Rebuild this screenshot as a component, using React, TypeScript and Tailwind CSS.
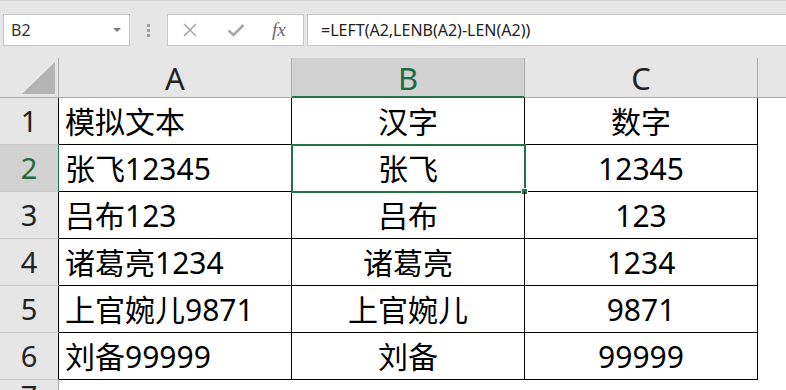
import React from "react";

const rows = [
  ["模拟文本", "汉字", "数字"],
  ["张飞12345", "张飞", "12345"],
  ["吕布123", "吕布", "123"],
  ["诸葛亮1234", "诸葛亮", "1234"],
  ["上官婉儿9871", "上官婉儿", "9871"],
  ["刘备99999", "刘备", "99999"],
];

const cols = ["A", "B", "C"];

const cellFont = "font-['Noto_Sans','Noto_Sans_CJK_SC',sans-serif]";

export default function App() {
  return (
    <div className="w-[786px] h-[390px] overflow-hidden bg-white font-['Noto_Sans','Noto_Sans_CJK_SC',sans-serif] text-[#222]">
      {/* Formula bar */}
      <div className="h-[58px] bg-[#e6e6e6] border-t border-[#d4d4d4] flex items-start pt-[13px]">
        <div className="ml-[3px] w-[127px] h-[32px] bg-white border border-[#c6c6c6] flex items-center justify-between pl-[7px] pr-[8px] text-[16px] text-[#333]">
          <span>B2</span>
          <svg width="8" height="4" viewBox="0 0 8 4">
            <path d="M0 0 L8 0 L4 4 Z" fill="#7a7a7a" />
          </svg>
        </div>
        <div className="w-[37px] h-[32px] flex flex-col items-center justify-center gap-[2px]">
          <span className="w-[3px] h-[3px] bg-[#a0a0a0]" />
          <span className="w-[3px] h-[3px] bg-[#a0a0a0]" />
          <span className="w-[3px] h-[3px] bg-[#a0a0a0]" />
        </div>
        <div className="w-[137px] h-[32px] bg-white border border-[#c6c6c6] flex items-center">
          <svg width="14" height="14" viewBox="0 0 14 14" className="ml-[15px]">
            <path d="M1 1 L13 13 M13 1 L1 13" stroke="#a8a8a8" strokeWidth="1.6" fill="none" />
          </svg>
          <svg width="18" height="14" viewBox="0 0 18 14" className="ml-[30px]">
            <path d="M1.5 7.5 L6.5 12 L16.5 2" stroke="#a8a8a8" strokeWidth="2.6" fill="none" />
          </svg>
          <span className="ml-[27px] italic font-['Liberation_Serif',serif] text-[19px] leading-none text-[#6a6a6a] -mt-[2px]">
            fx
          </span>
        </div>
        <div className="ml-[3px] flex-1 -mr-[2px] h-[32px] bg-white border border-[#c6c6c6] flex items-center pl-[13px] text-[16px] text-[#222]">
          =LEFT(A2,LENB(A2)-LEN(A2))
        </div>
      </div>

      {/* Column headers */}
      <div className="flex h-[40px] bg-[#e6e6e6]">
        <div className="w-[59px] shrink-0 border-r border-b border-[#ababab] flex items-end justify-end pr-[3px] pb-[3px]">
          <svg width="33" height="32" viewBox="0 0 33 32">
            <path d="M33 0 L33 32 L0 32 Z" fill="#b4b4b4" />
          </svg>
        </div>
        {cols.map((c) => {
          const sel = c === "B";
          return (
            <div
              key={c}
              className={
                sel
                  ? "w-[233px] shrink-0 border-r border-[#ababab] border-b-2 border-b-[#217346] bg-[#d2d2d2] text-[#1e6b41] flex items-center justify-center text-[31px] pt-[2px]"
                  : "w-[233px] shrink-0 border-r border-b border-[#ababab] flex items-center justify-center text-[31px] pt-[2px] text-[#222]"
              }
            >
              {c}
            </div>
          );
        })}
        <div className="flex-1 border-b border-[#ababab]" />
      </div>

      {/* Rows */}
      {rows.map((r, i) => {
        const selRow = i === 1;
        return (
          <div key={i} className="flex h-[47px]">
            <div
              className={
                selRow
                  ? "w-[59px] shrink-0 bg-[#d2d2d2] border-r border-r-[#217346] border-b border-b-[#c8c8c8] text-[#1e6b41] flex items-center justify-center text-[29px]"
                  : "w-[59px] shrink-0 bg-[#e6e6e6] border-r border-r-black border-b border-b-[#c8c8c8] flex items-center justify-center text-[29px] text-[#222]"
              }
            >
              {i + 1}
            </div>
            <div className={`w-[233px] shrink-0 border-r border-b border-black flex items-center pl-[6px] text-[30px] text-black whitespace-nowrap ${cellFont}`}>
              {r[0]}
            </div>
            <div className={`relative w-[233px] shrink-0 border-r border-b border-black flex items-center justify-center text-[30px] text-black ${cellFont}`}>
              {r[1]}
              {selRow && (
                <div className="absolute left-[-1px] top-[-1px] right-[-2px] bottom-[-2px] border-2 border-[#217346]">
                  <div className="absolute right-[-4px] bottom-[-4px] w-[7px] h-[7px] bg-[#217346] border border-white" />
                </div>
              )}
            </div>
            <div className={`w-[233px] shrink-0 border-r border-b border-black flex items-center justify-center text-[30px] text-black ${cellFont}`}>
              {r[2]}
            </div>
            <div className="flex-1" />
          </div>
        );
      })}

      {/* Row 7, cut off */}
      <div className="flex h-[30px]">
        <div className="w-[59px] shrink-0 bg-[#e6e6e6] border-r border-[#ababab] flex items-start justify-center text-[29px] leading-none pt-[1px] text-[#222]">
          7
        </div>
        <div className="flex-1" />
      </div>
    </div>
  );
}
